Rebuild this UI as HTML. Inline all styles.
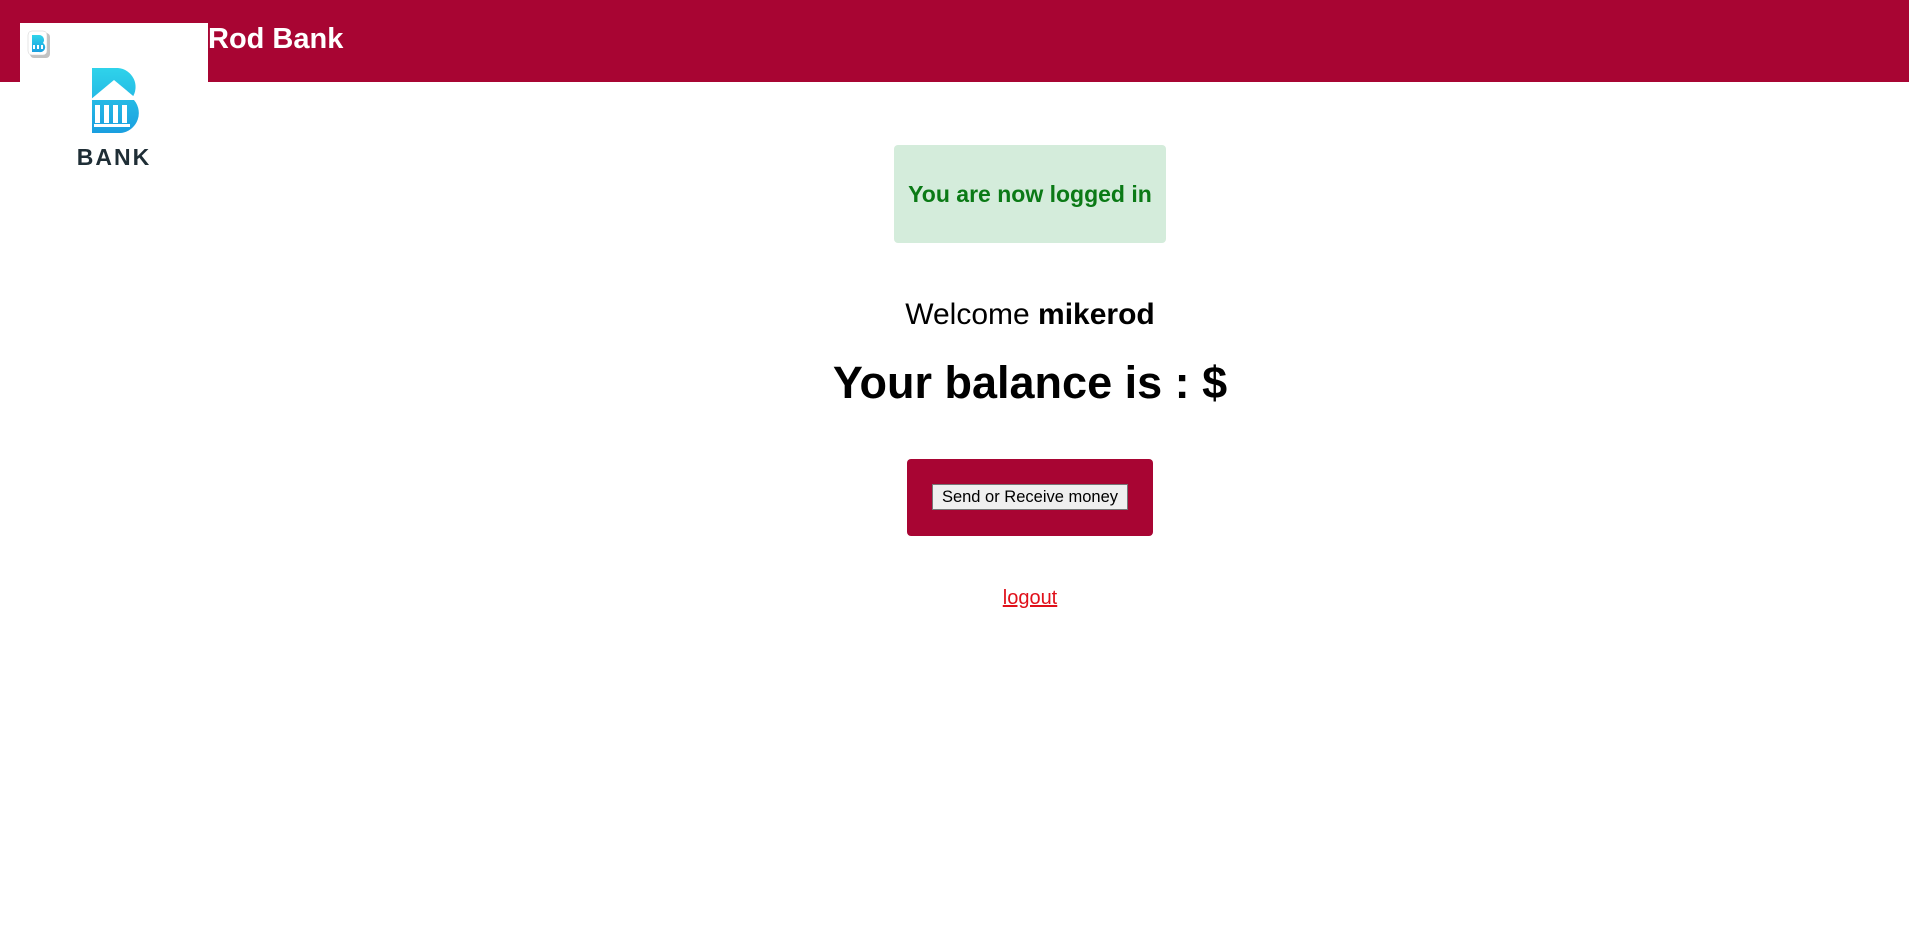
<!DOCTYPE html>
<html><head><meta charset="utf-8"><style>
body{margin:0;width:1909px;height:933px;background:#fff;font-family:"Liberation Sans",Arial,sans-serif;position:relative;overflow:hidden}
.hdr{position:absolute;left:0;top:0;width:1909px;height:82px;background:#a80533}
.title{position:absolute;left:208px;top:21px;color:#fff;font-weight:bold;font-size:29px;line-height:36px}
.logo{position:absolute;left:20px;top:23px;width:188px;height:150px;background:#fff}
.c{position:absolute;left:0;width:2060px;text-align:center}
</style></head><body>
<div class="hdr"></div>
<div class="title">Rod Bank</div>
<div class="logo">
<svg width="188" height="150" viewBox="20 23 188 150" style="position:absolute;left:0;top:0">
<defs><linearGradient id="g" x1="0" y1="0" x2="0" y2="1"><stop offset="0" stop-color="#2fd3ea"/><stop offset="1" stop-color="#1a9fe0"/></linearGradient></defs>
<rect x="30" y="33" width="20" height="25" rx="4" fill="#999" opacity="0.6"/>
<rect x="28" y="31" width="19" height="24" rx="4" fill="#fff" stroke="#ccc" stroke-width="0.5"/>
<path d="M32 35h7a5 5 0 0 1 4 8a5 5 0 0 1-4 9h-7z" fill="url(#g)"/>
<rect x="33" y="45" width="2" height="4" fill="#fff"/><rect x="37" y="45" width="2" height="4" fill="#fff"/><rect x="41" y="45" width="2" height="4" fill="#fff"/>
<path d="M92 68h26a19 19 0 0 1 14 30a20 20 0 0 1-12 35h-28z" fill="url(#g)"/>
<path d="M90 100l24-20l24 20z" fill="#fff"/>
<rect x="95" y="105" width="5" height="18" fill="#fff"/><rect x="104" y="105" width="5" height="18" fill="#fff"/><rect x="113" y="105" width="5" height="18" fill="#fff"/><rect x="122" y="105" width="5" height="18" fill="#fff"/>
<rect x="94" y="124" width="36" height="3" fill="#fff"/>
<text x="114" y="165" text-anchor="middle" font-family="Liberation Sans,sans-serif" font-weight="bold" font-size="23" letter-spacing="2" fill="#1f2e36">BANK</text>
</svg>
</div>
<div style="position:absolute;left:894px;top:145px;width:272px;height:98px;background:#d4ecdb;border-radius:4px;color:#0b7a16;font-weight:bold;font-size:23px;text-align:center;line-height:98px">You are now logged in</div>
<div class="c" style="top:296px;font-size:30px;line-height:38px">Welcome <b>mikerod</b></div>
<div class="c" style="top:356px;font-size:45px;line-height:54px;font-weight:bold">Your balance is : $</div>
<div style="position:absolute;left:907px;top:459px;width:246px;height:77px;background:#a80533;border-radius:4px"></div>
<div style="position:absolute;left:932px;top:484px;width:194px;height:24px;background:#efefef;border:1px solid #767676;font-size:16.5px;line-height:24px;text-align:center;color:#000">Send or Receive money</div>
<div class="c" style="top:585px;font-size:20px;line-height:26px"><span style="color:#e0101a;text-decoration:underline">logout</span></div>
</body></html>
